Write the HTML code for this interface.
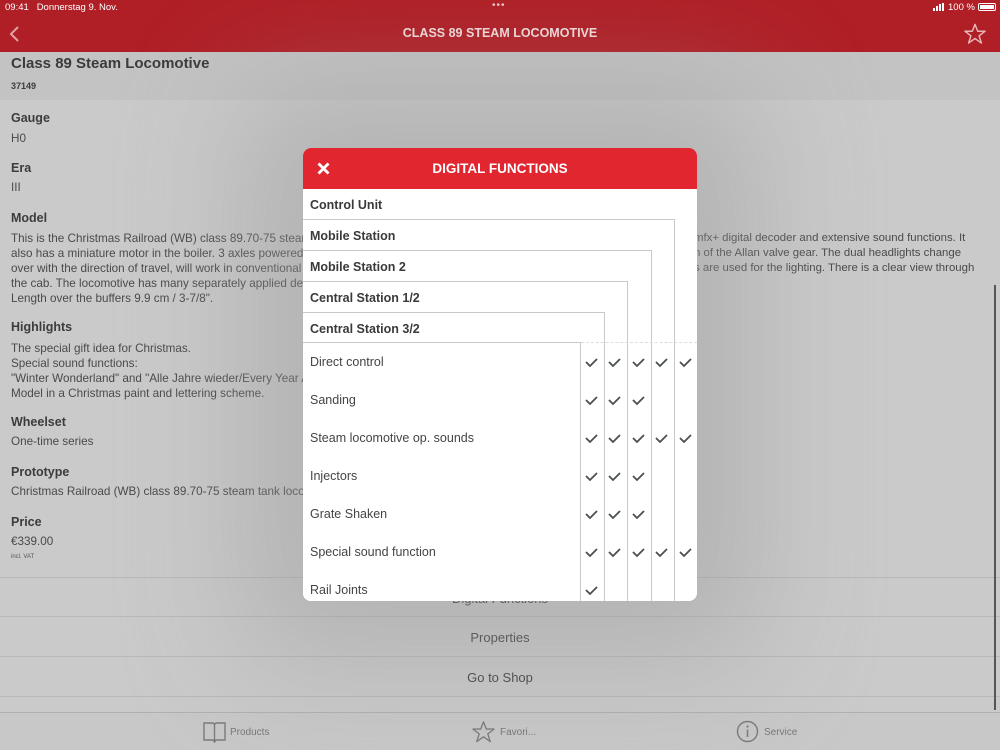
<!DOCTYPE html>
<html><head><meta charset="utf-8"><style>
*{margin:0;padding:0;box-sizing:border-box}
body{width:1000px;height:750px;overflow:hidden;background:#cacaca;font-family:"Liberation Sans",sans-serif;position:relative;color:#444}
.a{position:absolute;white-space:nowrap}
.h{font-weight:bold;font-size:12.5px;color:#3c3c3c}
.t{font-size:11.7px;color:#4a4a4a}
.btn{position:absolute;left:0;width:1000px;height:40px;border-bottom:1px solid #b8b8b8;text-align:center;line-height:42px;font-size:13px;color:#444}
.m{position:absolute;left:303px;top:148px;width:394px;height:453px;background:#fff;border-radius:8px;overflow:hidden;box-shadow:0 0 120px 60px rgba(150,150,150,.45)}
.mh{height:41px;background:#e1262f;color:#fff;font-weight:bold;font-size:13.5px;text-align:center;line-height:41px;position:relative}
.st{position:absolute;left:0;border:1px solid #c8c8c8;border-left:none;height:400px;background:#fff}
.sl{position:absolute;left:7px;font-weight:bold;font-size:12.5px;color:#3a3a3a}
.row{position:absolute;left:7px;font-size:12.5px;color:#444}
</style></head><body>
<div class="a" style="left:0;top:0;width:1000px;height:52px;background:#b01f26"></div>
<div class="a" style="left:5px;top:2px;font-size:9.5px;color:#fff">09:41&nbsp;&nbsp; Donnerstag 9. Nov.</div>
<div class="a" style="left:492px;top:0px;font-size:10px;color:#f3c0c0;letter-spacing:1px">•••</div>
<div class="a" style="left:933px;top:3px;width:13px;height:8px">
<div class="a" style="left:0;top:5px;width:2px;height:3px;background:#fff"></div><div class="a" style="left:3px;top:3px;width:2px;height:5px;background:#fff"></div><div class="a" style="left:6px;top:1px;width:2px;height:7px;background:#fff"></div><div class="a" style="left:9px;top:0;width:2px;height:8px;background:#fff"></div></div>
<div class="a" style="left:948px;top:2px;font-size:9.5px;color:#fff">100 %</div>
<div class="a" style="left:978px;top:3px;width:18px;height:8px;border:1px solid #fff;border-radius:2px;padding:1px"><div style="width:100%;height:100%;background:#fff"></div></div>
<svg class="a" style="left:9px;top:26px" width="12" height="16"><polyline points="9,1 2,8 9,15" fill="none" stroke="#e3a0a0" stroke-width="2"/></svg>
<div class="a" style="left:0;width:1000px;top:26px;text-align:center;color:#f1dada;font-weight:bold;font-size:12.5px">CLASS 89 STEAM LOCOMOTIVE</div>
<svg class="a" style="left:964px;top:23px" width="22" height="21" viewBox="0 0 24 23"><polygon points="12,1.5 15,9 23,9 16.5,14 19,22 12,17 5,22 7.5,14 1,9 9,9" fill="none" stroke="#e8b8b8" stroke-width="1.6" stroke-linejoin="round"/></svg>

<div class="a" style="left:0;top:52px;width:1000px;height:48px;background:#c3c3c3"></div>
<div class="a" style="left:11px;top:55px;font-size:15px;font-weight:bold;color:#3b3b3b">Class 89 Steam Locomotive</div>
<div class="a" style="left:11px;top:81px;font-size:9px;font-weight:bold;color:#3b3b3b">37149</div>

<div class="a h" style="left:11px;top:111px">Gauge</div>
<div class="a t" style="left:11px;top:132px">H0</div>
<div class="a h" style="left:11px;top:161px">Era</div>
<div class="a t" style="left:11px;top:181px">III</div>
<div class="a h" style="left:11px;top:211px">Model</div>
<div class="a t" style="left:11px;top:231px;line-height:15px">This is the Christmas Railroad (WB) class 89.70-75 steam l<br>also has a miniature motor in the boiler. 3 axles powered<br>over with the direction of travel, will work in conventional<br>the cab. The locomotive has many separately applied det<br>Length over the buffers 9.9 cm / 3-7/8".</div>
<div class="a t" style="left:694px;top:231px;line-height:15px;font-size:11.4px">mfx+ digital decoder and extensive sound functions. It<br>n of the Allan valve gear. The dual headlights change<br>s are used for the lighting. There is a clear view through</div>
<div class="a h" style="left:11px;top:320px">Highlights</div>
<div class="a t" style="left:11px;top:341px;line-height:15px">The special gift idea for Christmas.<br>Special sound functions:<br>"Winter Wonderland" and "Alle Jahre wieder/Every Year A<br>Model in a Christmas paint and lettering scheme.</div>
<div class="a h" style="left:11px;top:415px">Wheelset</div>
<div class="a t" style="left:11px;top:435px">One-time series</div>
<div class="a h" style="left:11px;top:465px">Prototype</div>
<div class="a t" style="left:11px;top:485px">Christmas Railroad (WB) class 89.70-75 steam tank locom</div>
<div class="a h" style="left:11px;top:515px">Price</div>
<div class="a t" style="left:11px;top:535px">€339.00</div>
<div class="a" style="left:11px;top:554px;font-size:6px;color:#555">incl. VAT</div>

<div class="btn" style="top:577px;border-top:1px solid #b8b8b8">Digital Functions</div>
<div class="btn" style="top:617px">Properties</div>
<div class="btn" style="top:657px">Go to Shop</div>
<div class="a" style="left:0;top:712px;width:1000px;height:38px;background:#c8c8c8;border-top:1px solid #b0b0b0"></div>
<div class="a" style="left:994px;top:285px;width:2px;height:425px;background:#555"></div>
<svg class="a" style="left:203px;top:721px" width="23" height="22"><path d="M1,2 L10,2 Q11.5,3 11.5,4 Q11.5,3 13,2 L22,2 L22,19 L13,19 L11.5,21 L10,19 L1,19 Z M11.5,4 L11.5,21" fill="none" stroke="#7a7a7a" stroke-width="1.4"/></svg>
<div class="a" style="left:230px;top:727px;font-size:10px;color:#777">Products</div>
<svg class="a" style="left:472px;top:720px" width="23" height="23" viewBox="0 0 24 23"><polygon points="12,1.5 15,9 23,9 16.5,14 19,22 12,17 5,22 7.5,14 1,9 9,9" fill="none" stroke="#7a7a7a" stroke-width="1.4" stroke-linejoin="round"/></svg>
<div class="a" style="left:500px;top:727px;font-size:10px;color:#777">Favori...</div>
<svg class="a" style="left:736px;top:720px" width="23" height="23"><circle cx="11.5" cy="11.5" r="10" fill="none" stroke="#7a7a7a" stroke-width="1.4"/><circle cx="11.5" cy="6.5" r="1.1" fill="#7a7a7a"/><path d="M11.5,9.5 V17" stroke="#7a7a7a" stroke-width="1.5"/></svg>
<div class="a" style="left:764px;top:727px;font-size:10px;color:#777">Service</div>

<div class="m">
<div class="mh"><svg style="position:absolute;left:14px;top:14px" width="13" height="13"><path d="M1.5,1.5 L11.5,11.5 M11.5,1.5 L1.5,11.5" stroke="#fff" stroke-width="2.8"/></svg>DIGITAL FUNCTIONS</div>
<div class="sl" style="top:50px">Control Unit</div>
<div class="st" style="top:71px;width:372px"></div>
<div class="sl" style="top:81px">Mobile Station</div>
<div class="st" style="top:102px;width:349px"></div>
<div class="sl" style="top:112px">Mobile Station 2</div>
<div class="st" style="top:133px;width:325px"></div>
<div class="sl" style="top:143px">Central Station 1/2</div>
<div class="st" style="top:164px;width:302px"></div>
<div class="sl" style="top:174px">Central Station 3/2</div>
<div class="st" style="top:194px;width:278px"></div>
<div class="a" style="left:278px;top:194px;width:116px;border-top:1px dashed #ddd"></div>
<div class="row" style="top:207px">Direct control</div>
<div class="row" style="top:245px">Sanding</div>
<div class="row" style="top:283px">Steam locomotive op. sounds</div>
<div class="row" style="top:321px">Injectors</div>
<div class="row" style="top:359px">Grate Shaken</div>
<div class="row" style="top:397px">Special sound function</div>
<div class="row" style="top:435px">Rail Joints</div>
<svg class="a" style="left:0;top:0" width="394" height="453">
<defs><path id="c" d="M0,4 L4,8 L11,1" fill="none" stroke="#4a4f52" stroke-width="1.8"/></defs>
<g transform="translate(283,210)"><use href="#c"/><use href="#c" x="23"/><use href="#c" x="47"/><use href="#c" x="70"/><use href="#c" x="94"/></g>
<g transform="translate(283,248)"><use href="#c"/><use href="#c" x="23"/><use href="#c" x="47"/></g>
<g transform="translate(283,286)"><use href="#c"/><use href="#c" x="23"/><use href="#c" x="47"/><use href="#c" x="70"/><use href="#c" x="94"/></g>
<g transform="translate(283,324)"><use href="#c"/><use href="#c" x="23"/><use href="#c" x="47"/></g>
<g transform="translate(283,362)"><use href="#c"/><use href="#c" x="23"/><use href="#c" x="47"/></g>
<g transform="translate(283,400)"><use href="#c"/><use href="#c" x="23"/><use href="#c" x="47"/><use href="#c" x="70"/><use href="#c" x="94"/></g>
<g transform="translate(283,438)"><use href="#c"/></g>
</svg>
</div>
</body></html>
